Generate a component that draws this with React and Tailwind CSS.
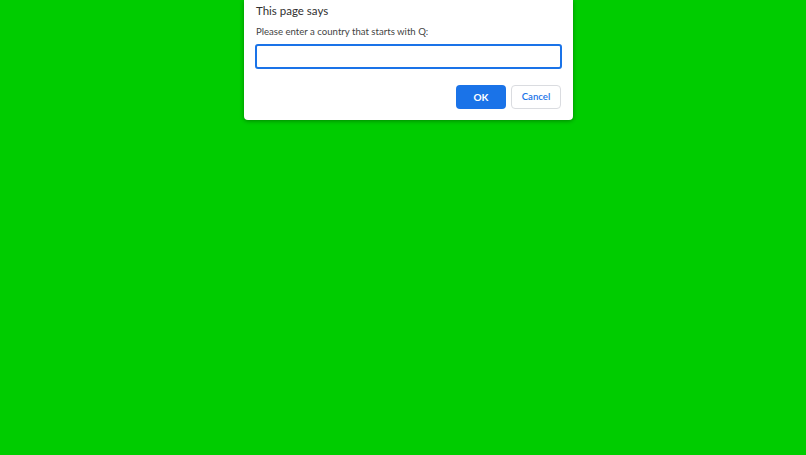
export default function App() {
  return (
    <div className="w-[806px] h-[455px] bg-[#00cc00] relative overflow-hidden" style={{ fontFamily: 'Lato, "Open Sans", sans-serif' }}>
      <div className="absolute left-[244px] top-0 w-[329px] bg-white rounded-b-[4px] shadow-[0_1px_4px_rgba(0,0,0,0.35)] px-[12px] pb-[11px]">
        <div className="pt-[2px] text-[11.5px] leading-[17px] text-[#303030]">This page says</div>
        <div className="mt-[6px] text-[9.6px] leading-[13px] text-[#444]">Please enter a country that starts with Q:</div>
        <div className="mt-[6px] h-[25px] w-[307px] -ml-[1px] border-2 border-[#1a73e8] rounded-[3px]"></div>
        <div className="mt-[16px] flex justify-end gap-[5px]">
          <button className="w-[50px] h-[24px] rounded-[4px] bg-[#1a73e8] text-white text-[10px] font-bold">OK</button>
          <button className="w-[50px] h-[24px] rounded-[4px] bg-white border border-[#dadce0] text-[#1a73e8] text-[9.6px] font-semibold">Cancel</button>
        </div>
      </div>
    </div>
  );
}
